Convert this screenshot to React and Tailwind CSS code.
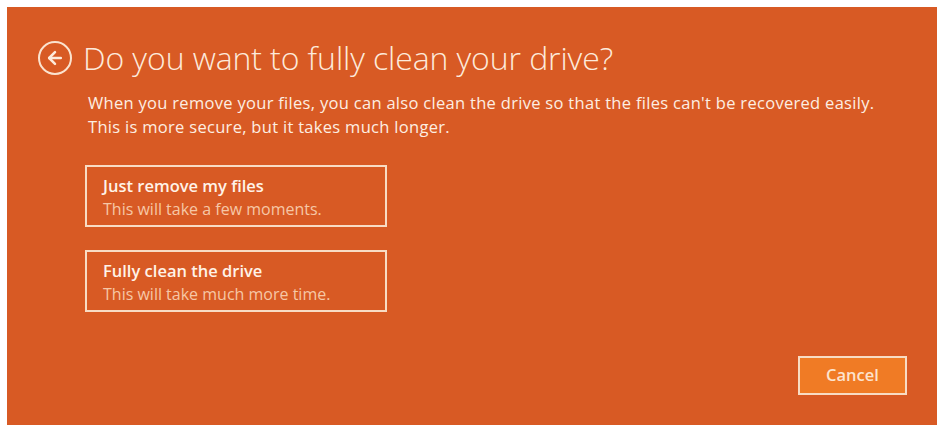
import { ArrowLeft } from 'lucide-react'

function Choice({ title, sub }) {
  return (
    <button className="flex flex-col items-start w-[302px] h-[62px] border-2 border-[#f8dcc4] px-[16px] pt-[8px] text-left">
      <span className="text-[16.5px] font-semibold text-[#fff3e8] leading-[22px]">{title}</span>
      <span className="text-[16px] text-[#f6c7a6] leading-[24px]">{sub}</span>
    </button>
  )
}

export default function App() {
  return (
    <div className="w-[943px] h-[429px] bg-white px-[7px] pt-[7px] font-['Open_Sans',sans-serif]">
      <div className="flex flex-col w-[930px] h-[418px] bg-[#d85a24]">
        {/* heading */}
        <div className="flex items-center gap-[11px] pl-[31px] pt-[33px]">
          <span className="flex items-center justify-center w-[34px] h-[34px] rounded-full border-2 border-[#fbe3cf]">
            <ArrowLeft className="w-[20px] h-[20px] text-[#fdeadb]" strokeWidth={3} />
          </span>
          <h1 className="text-[32px] font-light text-[#fdeadb] leading-[36px] tracking-[-0.1px]">
            Do you want to fully clean your drive?
          </h1>
        </div>

        <p className="pl-[81px] mt-[15px] text-[16.5px] leading-[24px] tracking-[0.3px] text-[#fdeee2]">
          When you remove your files, you can also clean the drive so that the files can&apos;t be recovered easily.
          <br />
          This is more secure, but it takes much longer.
        </p>

        <div className="flex flex-col gap-[23px] pl-[78px] mt-[26px]">
          <Choice title="Just remove my files" sub="This will take a few moments." />
          <Choice title="Fully clean the drive" sub="This will take much more time." />
        </div>

        <div className="flex justify-end pr-[30px] mt-auto mb-[30px]">
          <button className="w-[109px] h-[39px] border-2 border-[#f8dcc4] bg-[#f07b25] text-[16.5px] font-semibold text-[#fde3cd]">
            Cancel
          </button>
        </div>
      </div>
    </div>
  )
}
